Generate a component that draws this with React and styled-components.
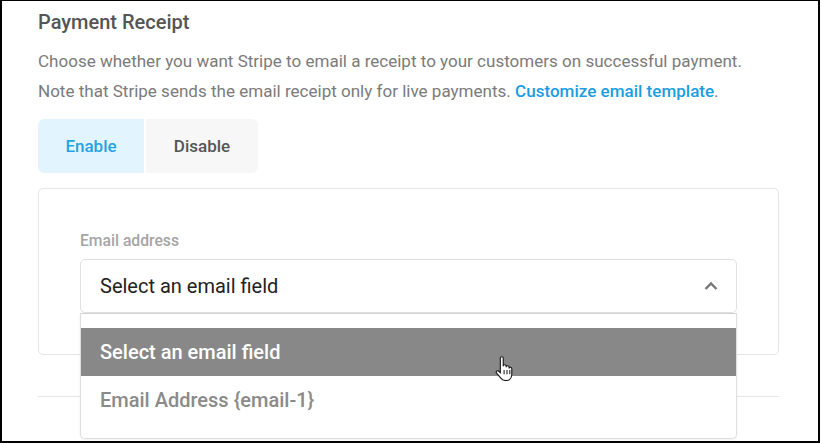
import React from "react";
import styled, { createGlobalStyle } from "styled-components";

const Global = createGlobalStyle`
  html, body { margin: 0; padding: 0; background: #fff; }
  body { font-family: Roboto, "Liberation Sans", Arial, sans-serif; }
  * { box-sizing: border-box; }
`;

const Frame = styled.div`
  width: 820px;
  height: 443px;
  border-style: solid;
  border-color: #000;
  border-width: 1px 2px 2px 2px;
  overflow: hidden;
  position: relative;
  padding: 9px 39px 0 36px;
`;

const Title = styled.h2`
  margin: 0;
  font-size: 20px;
  line-height: 24px;
  font-weight: 500;
  color: #555;
`;

const Description = styled.p`
  margin: 11.5px 0 0;
  font-size: 17.05px;
  line-height: 30px;
  color: #7b7b7b;
`;

const Link = styled.a`
  color: #1b9ddf;
  font-weight: 500;
  text-decoration: none;
`;

const Toggle = styled.div`
  display: flex;
  gap: 2px;
  margin-top: 13px;
`;

const ToggleButton = styled.button`
  border: 0;
  height: 54px;
  width: ${(p) => p.$width}px;
  font-family: inherit;
  font-size: 17px;
  font-weight: 500;
  background: ${(p) => (p.$active ? "#e2f5fe" : "#f7f7f7")};
  color: ${(p) => (p.$active ? "#27a2e2" : "#555")};
  border-radius: ${(p) => (p.$active ? "6px 0 0 6px" : "0 6px 6px 0")};
  padding: 0;
`;

const Card = styled.div`
  margin-top: 15px;
  height: 167px;
  border: 1px solid #e6e6e6;
  border-radius: 5px;
  padding: 42.5px 41px 0 41px;
`;

const Label = styled.div`
  font-size: 15.7px;
  line-height: 20px;
  font-weight: 500;
  color: #a5a5a5;
`;

const Field = styled.div`
  position: relative;
  margin-top: 7.5px;
`;

const SelectBox = styled.div`
  height: 54px;
  border: 1px solid #e1e1e1;
  border-radius: 5px;
  display: flex;
  align-items: center;
  justify-content: space-between;
  padding: 0 18px 0 19px;
  font-size: 20px;
  color: #222;
`;

const Menu = styled.ul`
  position: absolute;
  left: 0;
  right: 0;
  top: 54px;
  margin: 0;
  list-style: none;
  padding: 14px 0;
  background: #fff;
  border: 1px solid #dedede;
  border-top-color: #d2d2d2;
  border-radius: 0 0 5px 5px;
  box-shadow: 0 1px 3px rgba(0, 0, 0, 0.06);
  z-index: 2;
`;

const Option = styled.li`
  height: 48px;
  display: flex;
  align-items: center;
  padding-left: 19px;
  font-size: 20px;
  font-weight: 500;
  background: ${(p) => (p.$highlighted ? "#888888" : "transparent")};
  color: ${(p) => (p.$highlighted ? "#fff" : "#8a8a8a")};
`;

const Divider = styled.hr`
  margin: 41px 0 0;
  border: 0;
  border-top: 1px solid #e6e6e6;
`;

const Pointer = styled.svg`
  position: absolute;
  left: 493px;
  top: 355px;
  z-index: 3;
`;

function ChevronUp() {
  return (
    <svg width="14" height="10" viewBox="0 0 14 10">
      <path d="M1.5 8 L7 2.5 L12.5 8" fill="none" stroke="#777" strokeWidth="2.4" />
    </svg>
  );
}

export default function App() {
  return (
    <>
      <Global />
      <Frame>
        <Title>Payment Receipt</Title>
        <Description>
          Choose whether you want Stripe to email a receipt to your customers on successful payment.
          <br />
          Note that Stripe sends the email receipt only for live payments.{" "}
          <Link href="#">Customize email template</Link>.
        </Description>
        <Toggle>
          <ToggleButton $active $width={106}>Enable</ToggleButton>
          <ToggleButton $width={112}>Disable</ToggleButton>
        </Toggle>
        <Card>
          <Label>Email address</Label>
          <Field>
            <SelectBox>
              <span>Select an email field</span>
              <ChevronUp />
            </SelectBox>
            <Menu>
              <Option $highlighted>Select an email field</Option>
              <Option>Email Address {"{email-1}"}</Option>
            </Menu>
          </Field>
        </Card>
        <Divider />
        <Pointer width="19" height="25" viewBox="0 0 18 24">
          <path
            d="M5 2.2c0-.9.6-1.5 1.4-1.5s1.4.6 1.4 1.5v7.3c.2-.7.8-1.1 1.4-1.1.8 0 1.4.6 1.4 1.4v.6c.2-.6.8-1 1.4-1 .8 0 1.4.6 1.4 1.4v.8c.2-.5.7-.8 1.3-.8.8 0 1.3.6 1.3 1.4v5.3c0 3.6-2.4 6-5.6 6H9.8c-1.8 0-3-.7-4.1-2L1.4 16.5c-.5-.6-.4-1.5.2-2 .6-.5 1.5-.4 2 .2L5 16.3z"
            fill="#fff"
            stroke="#1a1a1a"
            strokeWidth="1.1"
            strokeLinejoin="round"
          />
          <path d="M8.6 13.5v4M11.4 13.5v4M14.1 13.5v4" stroke="#1a1a1a" strokeWidth="1" />
        </Pointer>
      </Frame>
    </>
  );
}
